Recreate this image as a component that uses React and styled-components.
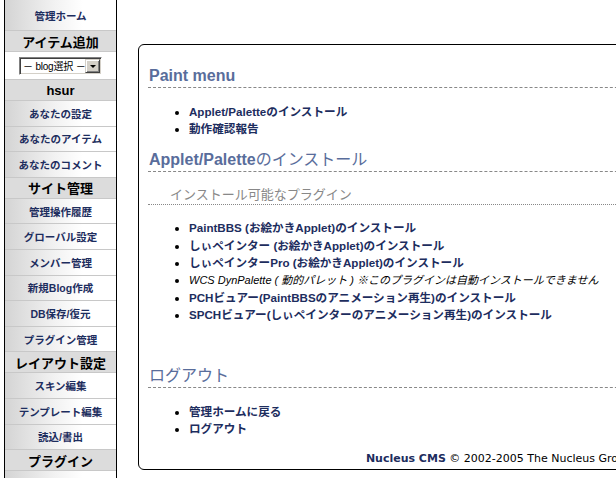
import styled, { createGlobalStyle } from 'styled-components'

const GlobalStyle = createGlobalStyle`
  html, body {
    margin: 0;
    padding: 0;
    overflow: hidden;
    background: #fff;
  }
  body {
    font-family: "Liberation Sans", "Noto Sans CJK JP", sans-serif;
    color: #000;
  }
`

const menu = [
  { type: 'item', label: '管理ホーム', h: 30 },
  { type: 'head', label: 'アイテム追加' },
  { type: 'select' },
  { type: 'head', label: 'hsur' },
  { type: 'item', label: 'あなたの設定' },
  { type: 'item', label: 'あなたのアイテム' },
  { type: 'item', label: 'あなたのコメント' },
  { type: 'head', label: 'サイト管理' },
  { type: 'item', label: '管理操作履歴' },
  { type: 'item', label: 'グローバル設定' },
  { type: 'item', label: 'メンバー管理' },
  { type: 'item', label: '新規Blog作成' },
  { type: 'item', label: 'DB保存/復元' },
  { type: 'item', label: 'プラグイン管理' },
  { type: 'head', label: 'レイアウト設定' },
  { type: 'item', label: 'スキン編集' },
  { type: 'item', label: 'テンプレート編集' },
  { type: 'item', label: '読込/書出' },
  { type: 'head', label: 'プラグイン' },
  { type: 'item', label: '' },
]

const plugins = [
  { label: 'PaintBBS (お絵かきApplet)のインストール' },
  { label: 'しぃペインター (お絵かきApplet)のインストール' },
  { label: 'しぃペインターPro (お絵かきApplet)のインストール' },
  { label: 'WCS DynPalette ( 動的パレット ) ※このプラグインは自動インストールできません', disabled: true },
  { label: 'PCHビュアー(PaintBBSのアニメーション再生)のインストール' },
  { label: 'SPCHビュアー(しぃペインターのアニメーション再生)のインストール' },
]

export default function App() {
  return (
    <Page>
      <GlobalStyle />
      <Sidebar>
        {menu.map((m, i) => {
          if (m.type === 'head') return <MenuHead key={i}>{m.label}</MenuHead>
          if (m.type === 'select')
            return (
              <SelectRow key={i}>
                <FakeSelect>
                  <SelectText>－ blog選択 －</SelectText>
                  <SelectButton />
                </FakeSelect>
              </SelectRow>
            )
          return (
            <MenuItem key={i} $h={m.h} href="#">
              {m.label}
            </MenuItem>
          )
        })}
      </Sidebar>

      <Panel>
        <H2>Paint menu</H2>
        <List>
          <li><Link href="#">Applet/Paletteのインストール</Link></li>
          <li><Link href="#">動作確認報告</Link></li>
        </List>

        <H2 $top={13}>
          Applet/Palette<Thin>のインストール</Thin>
        </H2>
        <H3>インストール可能なプラグイン</H3>
        <List $top={14}>
          {plugins.map((p) =>
            p.disabled ? (
              <li key={p.label}><Disabled>{p.label}</Disabled></li>
            ) : (
              <li key={p.label}><Link href="#">{p.label}</Link></li>
            )
          )}
        </List>

        <H2 $top={42}><Thin>ログアウト</Thin></H2>
        <List>
          <li><Link href="#">管理ホームに戻る</Link></li>
          <li><Link href="#">ログアウト</Link></li>
        </List>

        <Footer>
          <FooterLink href="#">Nucleus CMS</FooterLink> © 2002-2005 The Nucleus Group
        </Footer>
      </Panel>
    </Page>
  )
}

const Page = styled.div`
  display: flex;
  align-items: flex-start;
  width: 700px;
`

const Sidebar = styled.nav`
  width: 111px;
  min-height: 100vh;
  margin-left: 4px;
  flex-shrink: 0;
  border-left: 1px solid #000;
  border-right: 1px solid #000;
  display: flex;
  flex-direction: column;
`

const MenuItem = styled.a`
  display: flex;
  align-items: center;
  justify-content: center;
  height: ${(p) => p.$h || 24.6}px;
  border-bottom: 1px solid #c8c8c8;
  background: linear-gradient(to right, #d4d4d4 0%, #f2f2f2 45%, #fff 70%);
  color: #1d2d5e;
  font-size: 10.5px;
  font-weight: bold;
  text-decoration: none;
  white-space: nowrap;
`

const MenuHead = styled.div`
  display: flex;
  align-items: center;
  justify-content: center;
  height: 20px;
  border-bottom: 1px solid #c8c8c8;
  background: #dcdcdc;
  color: #000;
  font-size: 13px;
  font-weight: bold;
  white-space: nowrap;
`

const SelectRow = styled.div`
  display: flex;
  align-items: center;
  justify-content: center;
  height: 27px;
  border-bottom: 1px solid #c8c8c8;
  background: #fff;
`

const FakeSelect = styled.div`
  display: flex;
  align-items: stretch;
  width: 83px;
  height: 18px;
  box-sizing: border-box;
  border-top: 1px solid #808080;
  border-left: 1px solid #808080;
  border-bottom: 1px solid #fff;
  border-right: 1px solid #fff;
  box-shadow: inset 1px 1px 0 #404040, inset -1px -1px 0 #d4d0c8;
  background: #fff;
  padding: 1px;
`

const SelectText = styled.span`
  flex: 1;
  display: flex;
  align-items: center;
  padding-left: 2px;
  font-size: 10px;
  letter-spacing: -0.2px;
  color: #000;
  white-space: nowrap;
  overflow: hidden;
`

const SelectButton = styled.span`
  position: relative;
  width: 15px;
  flex-shrink: 0;
  box-sizing: border-box;
  background: #d4d0c8;
  border-top: 1px solid #d4d0c8;
  border-left: 1px solid #d4d0c8;
  border-bottom: 1px solid #404040;
  border-right: 1px solid #404040;
  box-shadow: inset 1px 1px 0 #fff, inset -1px -1px 0 #808080;

  &::after {
    content: '';
    position: absolute;
    left: 50%;
    top: 50%;
    margin-left: -3px;
    margin-top: -1px;
    border-left: 3px solid transparent;
    border-right: 3px solid transparent;
    border-top: 3px solid #000;
  }
`

const Panel = styled.main`
  width: 500px;
  flex-shrink: 0;
  margin-top: 44px;
  margin-left: 21px;
  border: 1px solid #000;
  border-radius: 6px;
  padding: 21px 0 3px 9px;
`

const H2 = styled.h2`
  margin: ${(p) => p.$top || 0}px 0 0;
  padding: 0 0 1px 1px;
  font-size: 16px;
  line-height: 20px;
  font-weight: bold;
  color: #596d9b;
  border-bottom: 1px dashed #888;
`

const Thin = styled.span`
  font-weight: normal;
`

const H3 = styled.h3`
  margin: 14px 0 0;
  padding: 0 0 0 22px;
  font-size: 13px;
  line-height: 18px;
  font-weight: normal;
  color: #888;
  border-bottom: 1px dotted #888;
`

const List = styled.ul`
  margin: ${(p) => p.$top || 15}px 0 0;
  padding: 0 0 0 41px;
  list-style: disc;
  font-size: 11.6px;
  line-height: 17.2px;
`

const Link = styled.a`
  color: #1d2d5e;
  font-weight: bold;
  text-decoration: none;
  white-space: nowrap;
`

const Disabled = styled.span`
  color: #000;
  font-style: italic;
  font-size: 11px;
  white-space: nowrap;
`

const Footer = styled.div`
  margin-top: 15px;
  padding-right: 16px;
  text-align: right;
  font-family: "DejaVu Sans", "Noto Sans CJK JP", sans-serif;
  font-size: 11px;
  line-height: 14px;
  white-space: nowrap;
`

const FooterLink = styled.a`
  color: #1d2d5e;
  font-weight: bold;
  text-decoration: none;
`
